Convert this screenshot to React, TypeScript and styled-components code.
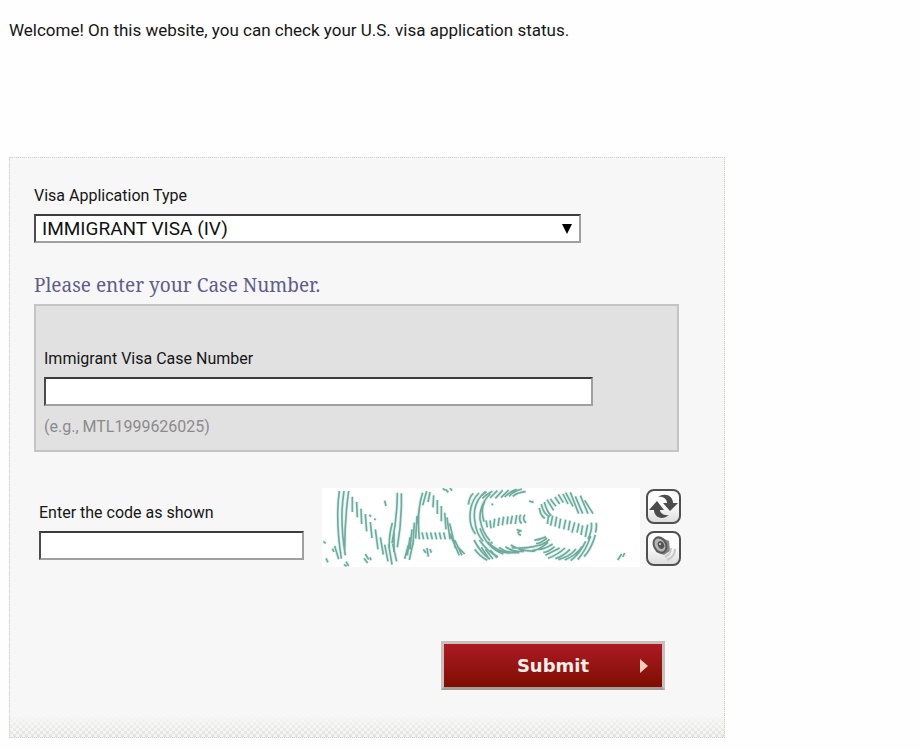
import React, { useState } from "react";
import styled, { createGlobalStyle } from "styled-components";

const GlobalStyle = createGlobalStyle`
  * { box-sizing: border-box; }
  body {
    margin: 0;
    background: #fefefe;
    color: #161616;
    font-family: Roboto, "Liberation Sans", sans-serif;
    font-size: 16px;
    line-height: 20px;
  }
`;

const Page = styled.main`
  padding: 20px 9px 12px;
`;

const Welcome = styled.p`
  margin: 0 0 117px;
  font-size: 17px;
`;

const Panel = styled.form`
  display: flex;
  flex-direction: column;
  max-width: 716px;
  padding: 28px 45px 47px 24px;
  border: 1px dotted #d3d3ca;
  background-color: #f7f7f7;
  background-image:
    linear-gradient(#f7f7f7 calc(100% - 22px), rgba(247, 247, 247, 0.1)),
    repeating-conic-gradient(#e0e0de 0 25%, #f4f4f3 0 50%);
  background-size: 100% 100%, 6px 6px;
  background-repeat: no-repeat, repeat;
`;

const Label = styled.label`
  display: block;
  margin-bottom: 8px;
`;

const sunken = `
  border: 2px solid;
  border-color: #3c3c3c #a0a0a0 #a0a0a0 #4c4c4c;
  border-radius: 0;
  background: #fff;
  color: #111;
`;

const SelectWrap = styled.div`
  display: grid;
  align-items: center;
  max-width: 547px;
  margin-bottom: 30px;
  > * { grid-area: 1 / 1; }
`;

const Select = styled.select`
  ${sunken}
  appearance: none;
  width: 100%;
  height: 29px;
  padding: 0 28px 0 6px;
  font: 19px/24px Roboto, sans-serif;
`;

const Arrow = styled.svg`
  justify-self: end;
  margin-right: 9px;
  pointer-events: none;
`;

const Heading = styled.h2`
  margin: 0 0 7px;
  color: #5f5d8c;
  font: 400 19px/24px "Noto Serif", "DejaVu Serif", serif;
`;

const CaseBox = styled.section`
  padding: 43px 84px 13px 8px;
  border: 2px solid #c4c4c4;
  background: #e1e1e1;
`;

const TextInput = styled.input`
  ${sunken}
  display: block;
  width: 100%;
  height: 29px;
  padding: 0 6px;
  font: 18px/24px Roboto, sans-serif;
`;

const Hint = styled.p`
  margin: 11px 0 0;
  color: #8b8b8b;
`;

const CodeRow = styled.div`
  display: flex;
  margin: 36px -2px 74px 5px;
`;

const CodeField = styled.div`
  flex: 1 1 265px;
  max-width: 265px;
  margin-right: 18px;
  padding-top: 15px;
`;

const CodeImage = styled.svg`
  flex: 0 1 318px;
  min-width: 0;
  height: 79px;
  background: #fff;
`;

const IconColumn = styled.div`
  display: flex;
  flex-direction: column;
  gap: 7px;
  margin-left: 6px;
  padding-top: 1px;
`;

const IconButton = styled.button`
  display: grid;
  place-items: center;
  width: 35px;
  height: 35px;
  padding: 0;
  border: 2px solid #505050;
  border-radius: 8px;
  background: linear-gradient(#fdfdfd 40%, #dedede);
  cursor: pointer;
`;

const Submit = styled.button`
  display: grid;
  grid-template-columns: 1fr 16px;
  align-items: center;
  align-self: flex-end;
  width: 224px;
  height: 49px;
  margin-right: 14px;
  padding: 0 6px 0 22px;
  border: 3px solid #c9bfbf;
  border-bottom-color: #a79c9c;
  background: linear-gradient(#ad1923, #981515 45%, #7e0d00);
  color: #fbeeea;
  font: 700 18px/24px "DejaVu Sans", Verdana, sans-serif;
  text-align: center;
  cursor: pointer;
`;

const codeStrokes = [
  "M58 33Q46 118 64 236M72 33Q58 118 76 226M86 33Q74 118 74 212M44 198L56 238",
  "M97 50V96M110 66L112 112M123 86L125 132M136 102L140 154M151 126L156 174M166 148L174 208M181 172L190 224M194 194L204 244M206 194L216 254M218 192L230 244",
  "M232 38Q232 110 216 190M244 40Q246 120 232 202M217 128Q206 170 208 204M222 154L222 216",
  "M308 38Q290 90 298 178M320 34L308 76M299 76L292 130M291 108L287 176M283 128L279 194M276 148L270 208M270 172L262 226M265 196L254 236M280 184L268 240",
  "M330 36L324 66M341 46L339 82M352 60L352 102M364 78L364 124M374 98L378 148M381 112L390 178M389 130L406 204M389 160L418 226M404 180L426 226M412 200L434 222",
  "M306 157L311 178M319 157L324 178M332 157L337 178M345 157L350 178M358 157L363 178M371 157L376 178",
  "M460 40Q448 50 445 74M477 39Q450 65 450 110Q450 142 467 162M496 35Q457 68 464 120Q468 162 490 184M511 42Q478 72 480 118Q488 160 510 182M494 64Q481 90 492 125",
  "M462 180Q482 219 510 238M464 208Q480 230 502 241M478 180Q503 216 534 230M480 145Q501 206 550 222M504 185Q524 211 563 217",
  "M500 35L485 47M517 34Q497 46 487 55M532 32L510 54M548 31L526 55M566 30L543 53M590 28Q570 34 554 51M606 27Q580 34 567 49M617 35Q594 36 578 49",
  "M498 121L502 142M510 121L513 145M524 116L521 143M538 113L534 138M551 110L547 136M564 109L561 133M577 107L572 132M590 105L586 132M602 104Q594 119 605 131M615 104Q605 116 618 129",
  "M484 202L507 236M496 208L519 237M511 210L531 234M529 210Q556 223 588 216M537 202Q558 219 598 218M556 200Q576 216 612 214M572 195Q604 215 646 213M575 203Q610 207 646 199",
  "M602 152L592 158M605 153L590 149M594 161L603 166M627 63L641 67M666 175L643 181M678 170L652 181M681 174Q658 193 648 190M688 178Q670 196 645 198M684 187Q659 210 636 212",
  "M658 84Q662 109 675 115M664 72Q671 105 690 110M673 66Q681 98 694 107M681 59L701 91M691 57L708 79M705 51L719 72M715 43L730 68M729 42L744 72M737 38L759 79M751 37L776 101M766 49L788 101M781 47L804 101M794 61L819 101",
  "M685 110L682 132M698 107L692 137M710 110L705 140M722 116L717 145M737 119L731 148M750 122L745 151M764 127L756 158M777 130L771 158M788 136L783 165M803 134L796 171",
  "M814 128Q818 148 804 178M829 128Q830 148 826 158M826 164Q815 205 792 230M812 168Q798 211 773 239M797 184Q781 219 752 242M786 200Q770 225 734 240M768 207Q751 229 715 239M750 208Q731 228 706 236M735 204Q715 223 684 235M719 204L676 226M704 200Q684 217 670 217M698 192Q674 208 654 208",
  "M10 184L17 190M18 235L24 247M37 206L42 216M78 245L86 258M72 253L80 259M132 235L143 249M136 222L146 239M150 232L153 241M194 62L198 78M310 208L318 219M321 204L325 230M330 207L334 218M368 25L376 31M377 28L385 37M390 24L396 32M148 104L153 110M163 116L167 120M514 73H520M512 186L518 190M905 222L893 240M914 219L908 231",
];

function SecurityCode() {
  return (
    <CodeImage viewBox="6 24 954 237" preserveAspectRatio="none" role="img" aria-label="Security code">
      <g fill="none" stroke="#e0f5f1" strokeWidth="11">
        {codeStrokes.map((d, i) => <path key={i} d={d} />)}
      </g>
      <g fill="none" stroke="#72a99d" strokeWidth="5">
        {codeStrokes.map((d, i) => <path key={i} d={d} />)}
      </g>
    </CodeImage>
  );
}

function RefreshIcon() {
  return (
    <svg width="29" height="27" viewBox="0 0 29 27" aria-hidden="true">
      <g fill="#4c4c4c">
        <path d="M9 4C16 -1 24 3 24 10H29L21 18 14 10H18C18 6 14 3 9 4Z" />
        <path d="M20 22C13 28 5 24 5 17H0L8 8 15 17H11C11 20 15 23 20 22Z" />
      </g>
    </svg>
  );
}

function SpeakerIcon() {
  return (
    <svg width="29" height="27" viewBox="0 0 29 27" aria-hidden="true">
      <path d="M5 5 11 2 20 6 21 16 15 20 7 17Z" fill="#858585" />
      <ellipse cx="11" cy="10" rx="6" ry="8" transform="rotate(-28 11 10)" fill="#b5b5b5" stroke="#5a5a5a" strokeWidth="2" />
      <ellipse cx="12" cy="10" rx="3" ry="4" transform="rotate(-28 12 10)" fill="#555" />
      <circle cx="11" cy="9" r="1" fill="#ddd" />
      <g fill="none" stroke="#c8c8c8" strokeWidth="2">
        <path d="M22 13Q22 19 16 22" />
        <path d="M26 14Q26 22 18 25" />
      </g>
    </svg>
  );
}

export default function App() {
  const [visaType, setVisaType] = useState("IV");
  return (
    <>
      <GlobalStyle />
      <Page>
        <Welcome>Welcome! On this website, you can check your U.S. visa application status.</Welcome>
        <Panel onSubmit={(e) => e.preventDefault()}>
          <Label htmlFor="visa-type">Visa Application Type</Label>
          <SelectWrap>
            <Select id="visa-type" value={visaType} onChange={(e) => setVisaType(e.target.value)}>
              <option value="IV">IMMIGRANT VISA (IV)</option>
            </Select>
            <Arrow width="10" height="10" viewBox="0 0 10 10" aria-hidden="true">
              <path d="M0 0H10L5 10Z" fill="#000" />
            </Arrow>
          </SelectWrap>
          <Heading>Please enter your Case Number.</Heading>
          <CaseBox>
            <Label htmlFor="case-number">Immigrant Visa Case Number</Label>
            <TextInput id="case-number" type="text" aria-describedby="case-hint" />
            <Hint id="case-hint">(e.g., MTL1999626025)</Hint>
          </CaseBox>
          <CodeRow>
            <CodeField>
              <Label htmlFor="code">Enter the code as shown</Label>
              <TextInput id="code" type="text" autoComplete="off" />
            </CodeField>
            <SecurityCode />
            <IconColumn>
              <IconButton type="button" aria-label="New code"><RefreshIcon /></IconButton>
              <IconButton type="button" aria-label="Play code"><SpeakerIcon /></IconButton>
            </IconColumn>
          </CodeRow>
          <Submit type="submit">
            <span>Submit</span>
            <svg width="8" height="14" viewBox="0 0 8 14" aria-hidden="true">
              <path d="M0 0 8 7 0 14Z" fill="#f6cdbb" />
            </svg>
          </Submit>
        </Panel>
      </Page>
    </>
  );
}
